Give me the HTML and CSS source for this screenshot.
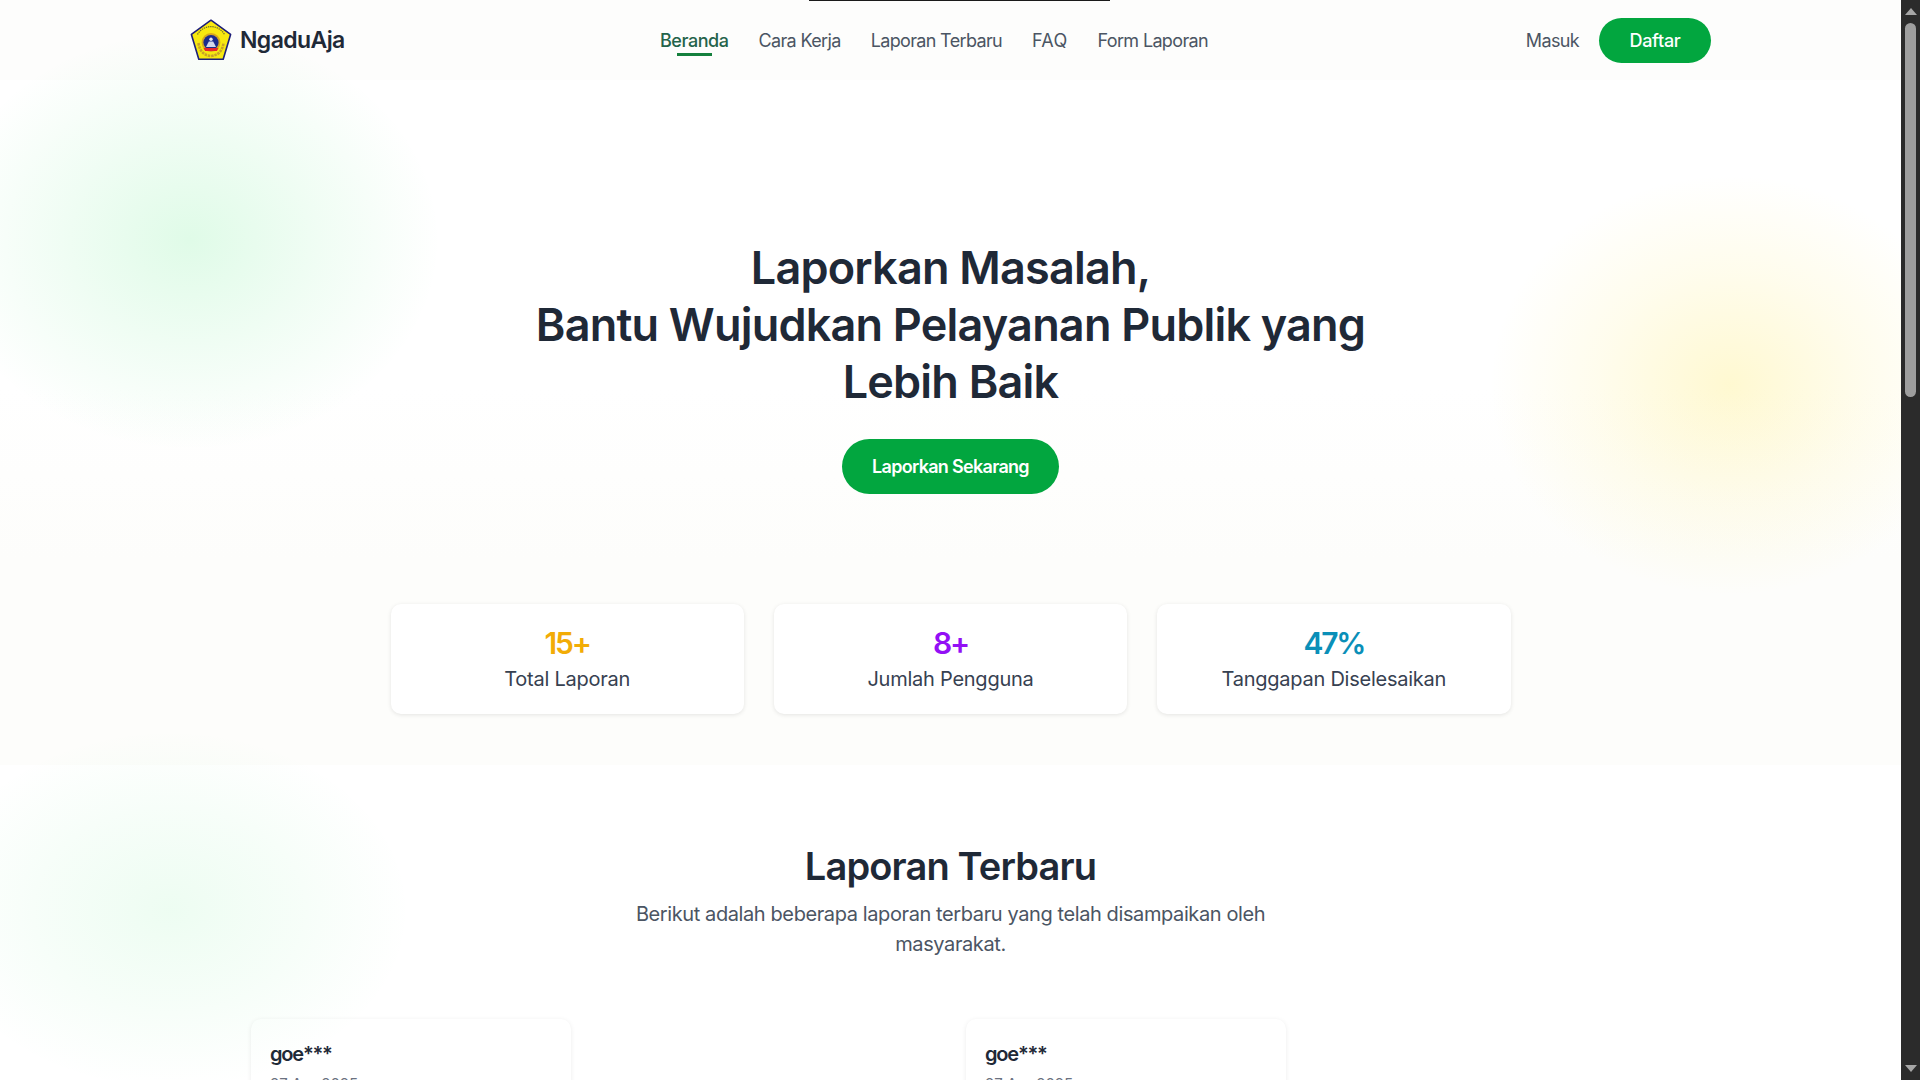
FILE: index.html
```html
<!DOCTYPE html>
<html lang="id">
<head>
<meta charset="utf-8">
<title>NgaduAja</title>
<link rel="stylesheet" href="styles.css">
</head>
<body>
<div class="window">
  <div class="page">
    <div class="blob blob-green-1"></div>
    <div class="blob blob-yellow"></div>
    <div class="blob blob-green-2"></div>
    <div class="top-line"></div>
    <header class="header">
      <a class="brand">
        <svg class="logo" viewBox="0 0 42 42" width="42" height="42" aria-hidden="true">
          <path d="M21 1.2 40.6 15.4 33.2 40.2H8.8L1.4 15.4Z" fill="#f9e80f" stroke="#1c1c78" stroke-width="1.6" stroke-linejoin="round"/>
          <path d="M7.5 15.5A15.5 15.5 0 0 1 34.5 15.5" fill="none" stroke="#70702c" stroke-width="1.2" stroke-dasharray="1.4 .8"/>
          <path d="M8.5 24C9.5 32 14 36.5 21 37 28 36.5 32.5 32 33.5 24" fill="none" stroke="#c9a227" stroke-width="2.6" stroke-dasharray="2.5 .8"/>
          <circle cx="21" cy="23.5" r="9.4" fill="#d8a81e"/>
          <circle cx="21" cy="23.5" r="7.6" fill="#1b2a8c"/>
          <circle cx="21" cy="20.3" r="1.7" fill="#e6e8f2"/>
          <path d="M18.8 22.5h4.4l2.8 5.5H16Z" fill="#d4d8ea"/>
          <path d="M13.5 29h15l-1.6 3h-11.8Z" fill="#e8262a"/>
        </svg>
        <span class="brand-name">NgaduAja</span>
      </a>
      <nav class="nav">
        <a class="nav-link active">Beranda</a>
        <a class="nav-link">Cara Kerja</a>
        <a class="nav-link">Laporan Terbaru</a>
        <a class="nav-link nav-link-caps">FAQ</a>
        <a class="nav-link">Form Laporan</a>
      </nav>
      <div class="auth">
        <a class="nav-link">Masuk</a>
        <a class="btn btn-small">Daftar</a>
      </div>
    </header>

    <section class="hero">
      <h1 class="hero-title">Laporkan Masalah,<br>Bantu Wujudkan Pelayanan Publik yang Lebih Baik</h1>
      <a class="btn btn-large">Laporkan Sekarang</a>
      <div class="stats">
        <div class="stat"><div class="stat-value amber">15+</div><div class="stat-label">Total Laporan</div></div>
        <div class="stat"><div class="stat-value purple">8+</div><div class="stat-label">Jumlah Pengguna</div></div>
        <div class="stat"><div class="stat-value blue">47%</div><div class="stat-label">Tanggapan Diselesaikan</div></div>
      </div>
    </section>

    <section class="reports">
      <h2 class="reports-title">Laporan Terbaru</h2>
      <p class="reports-sub">Berikut adalah beberapa laporan terbaru yang telah disampaikan oleh masyarakat.</p>
      <div class="report-grid">
        <div class="report-cell"><article class="report"><h3 class="report-user">goe***</h3><p class="report-date">27 Apr 2025</p></article></div>
        <div class="report-cell"><article class="report"><h3 class="report-user">goe***</h3><p class="report-date">27 Apr 2025</p></article></div>
      </div>
    </section>
  </div>
  <aside class="scrollbar" aria-hidden="true">
    <span class="arrow arrow-up"></span>
    <div class="track"><div class="thumb"></div></div>
    <span class="arrow arrow-down"></span>
  </aside>
</div>
</body>
</html>
```

FILE: styles.css
```css
* { box-sizing: border-box; }
html, body { margin: 0; height: 100%; overflow: hidden; }
body { font-family: "Inter", "Liberation Sans", sans-serif; color: #1f2937; background: #fff; }
h1, h2, h3, p { margin: 0; }

.window { display: flex; width: 1920px; height: 1080px; }
.page { position: relative; flex: 1; height: 1080px; overflow: hidden; background: #fff; }
.page > header, .page > section { position: relative; z-index: 1; }

.top-line { position: absolute; top: 0; left: 809px; width: 301px; height: 1px; background: #1a1a1a; z-index: 3; }

.blob { position: absolute; border-radius: 50%; z-index: 2; pointer-events: none; }
.blob-green-1 { left: -60px; top: 30px; width: 500px; height: 420px; background: radial-gradient(closest-side, rgba(60,230,110,.16), rgba(60,230,110,.07) 55%, rgba(60,230,110,0)); }
.blob-yellow { left: 1490px; top: 175px; width: 480px; height: 420px; background: radial-gradient(closest-side, rgba(255,232,90,.28), rgba(255,232,90,.11) 55%, rgba(255,232,90,0)); }
.blob-green-2 { left: -70px; top: 730px; width: 480px; height: 360px; background: radial-gradient(closest-side, rgba(60,230,110,.09), rgba(60,230,110,.045) 55%, rgba(60,230,110,0)); }

.header { display: flex; align-items: center; justify-content: space-between; height: 80px; padding: 0 190px; background: #fdfdfc; }
.brand { display: flex; align-items: center; gap: 8px; width: 430px; }
.logo { flex: none; }
.brand-name { font-size: 23px; font-weight: 600; color: #1f2937; letter-spacing: -.6px; }
.nav { display: flex; gap: 30px; flex: 1; padding-left: 40px; }
.nav-link { position: relative; font-size: 18px; color: #4b5563; letter-spacing: -.65px; white-space: nowrap; }
.nav-link-caps { letter-spacing: .3px; }
.nav-link.active { color: #24634a; font-weight: 500; letter-spacing: -.45px; }
.nav-link.active::after { content: ""; position: absolute; left: 17px; right: 17px; bottom: -5px; height: 3px; background: #15803d; }
.auth { display: flex; align-items: center; gap: 20px; }

.btn { display: inline-flex; align-items: center; justify-content: center; border-radius: 999px; background: #02a63f; color: #fff; font-weight: 500; letter-spacing: -.3px; }
.btn-small { width: 112px; height: 45px; font-size: 18px; }
.btn-large { width: 217px; height: 55px; font-size: 18px; font-weight: 600; margin-top: 29.5px; letter-spacing: -.7px; }

.hero { display: flex; flex-direction: column; align-items: center; height: 685px; padding-top: 158.5px; background: linear-gradient(#fff 0, #fff 45%, #fdfdfb 70%); }
.hero-title { width: 860px; font-size: 45px; font-weight: 600; line-height: 57px; text-align: center; letter-spacing: -.8px; color: #1f2937; }
.stats { display: grid; grid-template-columns: repeat(3, 1fr); gap: 30px; width: 1120px; margin-top: 110px; }
.stat { height: 110px; padding-top: 21px; background: #fff; border-radius: 10px; text-align: center; box-shadow: 0 1px 4px rgba(0,0,0,.1); }
.stat-value { font-size: 30px; font-weight: 600; line-height: 36px; letter-spacing: -2.2px; }
.stat-label { margin-top: 3px; font-size: 20px; line-height: 30px; color: #374151; letter-spacing: -.25px; }
.amber { color: #f2ac06; }
.purple { color: #9310f5; }
.blue { color: #0a8fb8; }

.reports { display: flex; flex-direction: column; align-items: center; padding-top: 77px; background: #fff; }
.reports-title { font-size: 38px; font-weight: 600; line-height: 48px; letter-spacing: -.85px; color: #1f2937; }
.reports-sub { width: 660px; margin-top: 9px; font-size: 20px; line-height: 30px; text-align: center; color: #4b5563; letter-spacing: -.4px; }
.report-grid { display: grid; grid-template-columns: 700px 700px; gap: 15px; width: 1415px; padding-left: 8px; margin-top: 60px; }
.report { width: 320px; height: 300px; padding: 21px 20px 20px 19px; background: #fff; border-radius: 10px; box-shadow: 0 1px 5px rgba(0,0,0,.08); }
.report-user { font-size: 20px; font-weight: 600; line-height: 28px; letter-spacing: -1.2px; color: #1f2937; }
.report-date { font-size: 15px; line-height: 20px; color: #6b7280; margin-top: 6px; }

.scrollbar { display: flex; flex-direction: column; align-items: center; width: 19px; height: 1080px; background: #2b2b2b; flex: none; }
.track { flex: 1; width: 100%; padding: 8px 4px 0; }
.thumb { height: 374px; background: #9e9e9e; border-radius: 6px; }
.arrow { flex: none; width: 0; height: 0; border-left: 6.5px solid transparent; border-right: 6.5px solid transparent; }
.arrow-up { margin-top: 8px; border-bottom: 7px solid #a6a6a6; }
.arrow-down { margin-bottom: 8px; border-top: 7px solid #a6a6a6; }
```
